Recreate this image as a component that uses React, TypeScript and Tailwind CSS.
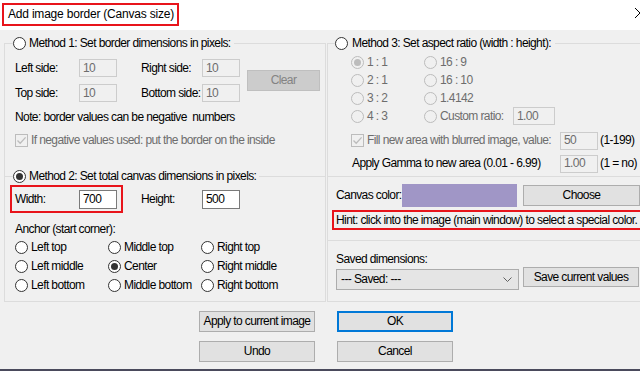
import React from 'react';

const body = "font-['Liberation_Sans',Arial,sans-serif] text-[12px] leading-[15px] tracking-[-0.6px] whitespace-nowrap";

function Radio({ checked = false, disabled = false }: { checked?: boolean; disabled?: boolean }) {
  return (
    <span
      className={
        disabled
          ? 'w-[13px] h-[13px] rounded-full border border-[#bcbcbc] bg-[#f0f0f0] flex items-center justify-center shrink-0'
          : 'w-[13px] h-[13px] rounded-full border border-[#333333] bg-white flex items-center justify-center shrink-0'
      }
    >
      {checked && (
        <span className={disabled ? 'w-[7px] h-[7px] rounded-full bg-[#bcbcbc]' : 'w-[7px] h-[7px] rounded-full bg-[#333333]'} />
      )}
    </span>
  );
}

function Check() {
  return (
    <span className="w-[13px] h-[13px] border border-[#bcbcbc] bg-[#f0f0f0] flex items-center justify-center shrink-0">
      <svg width="11" height="11" viewBox="0 0 11 11">
        <path d="M1.5 5.5 L4.2 8.3 L9.6 2.4" fill="none" stroke="#bcbcbc" strokeWidth="1.3" />
      </svg>
    </span>
  );
}

function Field({ value, disabled = false, w = 'w-[38px]', h = 'h-[18px]' }: { value: string; disabled?: boolean; w?: string; h?: string }) {
  return (
    <div
      className={
        disabled
          ? `${w} ${h} border border-[#cccccc] bg-[#f0f0f0] text-[#6d6d6d] pl-[3px] flex items-center shrink-0`
          : `${w} ${h} border border-[#7a7a7a] bg-white text-black pl-[3px] flex items-center shrink-0`
      }
    >
      {value}
    </div>
  );
}

function Btn({ label, w = 'w-[116px]', h = 'h-[21px]' }: { label: string; w?: string; h?: string }) {
  return <div className={`${w} ${h} bg-[#e1e1e1] border border-[#adadad] flex items-center justify-center shrink-0`}>{label}</div>;
}

const anchors = [
  ['Left top', 'Middle top', 'Right top'],
  ['Left middle', 'Center', 'Right middle'],
  ['Left bottom', 'Middle bottom', 'Right bottom'],
];

export default function App() {
  return (
    <div className={`w-[640px] h-[371px] overflow-hidden bg-[#f0f0f0] flex flex-col text-black ${body}`}>
      {/* title bar */}
      <div className="h-[30px] bg-white flex items-start shrink-0">
        <div className="ml-[2px] mt-[3px] h-[23px] w-[177px] border-2 border-[#e8141b] pl-[4px] flex items-center text-[12px] tracking-[-0.2px]">
          Add image border (Canvas size)
        </div>
        <svg className="ml-auto mr-[-5px] mt-[8px]" width="10" height="10" viewBox="0 0 10 10">
          <path d="M0 0 L10 10 M10 0 L0 10" stroke="#000" strokeWidth="1" />
        </svg>
      </div>

      <div className="flex pl-[4px] mt-[13px] gap-[1px]">
        {/* left column */}
        <div className="w-[322px] flex flex-col shrink-0">
          <div className="h-[134px] border border-[#dcdcdc] flex flex-col">
            <div className="-mt-[7px] ml-[8px] self-start bg-[#f0f0f0] pr-[3px] h-[13px] flex items-center gap-[3px]">
              <Radio />
              <span>Method 1: Set border dimensions in pixels:</span>
            </div>
            <div className="mt-[9px] pl-[10px] flex items-center">
              <div className="flex flex-col gap-[7px]">
                <div className="flex items-center h-[18px]">
                  <span className="w-[64px]">Left side:</span>
                  <Field value="10" disabled />
                  <span className="w-[61px] ml-[24px]">Right side:</span>
                  <Field value="10" disabled />
                </div>
                <div className="flex items-center h-[18px]">
                  <span className="w-[64px]">Top side:</span>
                  <Field value="10" disabled />
                  <span className="w-[61px] ml-[24px]">Bottom side:</span>
                  <Field value="10" disabled />
                </div>
              </div>
              <div className="ml-[7px] w-[73px] h-[21px] bg-[#cccccc] border border-[#bfbfbf] text-[#838383] flex items-center justify-center">
                Clear
              </div>
            </div>
            <div className="mt-[8px] pl-[10px] h-[15px]">Note: border values can be negative&nbsp; numbers</div>
            <div className="mt-[8px] pl-[10px] h-[14px] flex items-center gap-[3px] text-[#6d6d6d]">
              <Check />
              <span>If negative values used: put the border on the inside</span>
            </div>
          </div>

          <div className="-mt-[1px] h-[126px] border border-[#dcdcdc] flex flex-col">
            <div className="-mt-[7px] ml-[8px] self-start bg-[#f0f0f0] pr-[3px] h-[13px] flex items-center gap-[3px]">
              <Radio checked />
              <span>Method 2: Set total canvas dimensions in pixels:</span>
            </div>
            <div className="mt-[2px] ml-[5px] h-[28px] flex items-center">
              <div className="w-[113px] h-[28px] border-2 border-[#e8141b] pl-[3px] flex items-center">
                <span className="w-[64px]">Width:</span>
                <Field value="700" h="h-[19px]" />
              </div>
              <span className="w-[61px] ml-[18px]">Height:</span>
              <Field value="500" h="h-[19px]" />
            </div>
            <div className="mt-[9px] pl-[10px] h-[15px]">Anchor (start corner):</div>
            <div className="mt-[1px] pl-[10px] flex flex-col">
              {anchors.map((row) => (
                <div key={row[0]} className="h-[19px] flex items-center">
                  {row.map((a) => (
                    <div key={a} className="w-[93px] flex items-center gap-[3px]">
                      <Radio checked={a === 'Center'} />
                      <span>{a}</span>
                    </div>
                  ))}
                </div>
              ))}
            </div>
          </div>
        </div>

        {/* right column */}
        <div className="w-[330px] flex flex-col shrink-0">
          <div className="h-[134px] border border-[#dcdcdc] flex flex-col">
            <div className="-mt-[7px] ml-[7px] self-start bg-[#f0f0f0] pr-[4px] h-[13px] flex items-center gap-[4px]">
              <Radio />
              <span>Method 3: Set aspect ratio (width : height):</span>
            </div>
            <div className="mt-[3px] pl-[23px] flex flex-col text-[#6d6d6d]">
              {[
                ['1 : 1', '16 : 9'],
                ['2 : 1', '16 : 10'],
                ['3 : 2', '1.4142'],
                ['4 : 3', 'Custom ratio:'],
              ].map(([a, b]) => (
                <div key={a} className="h-[18px] flex items-center">
                  <div className="w-[73px] flex items-center gap-[3px]">
                    <Radio disabled checked={a === '1 : 1'} />
                    <span>{a}</span>
                  </div>
                  <div className="w-[89px] flex items-center gap-[3px]">
                    <Radio disabled />
                    <span>{b}</span>
                  </div>
                  {a === '4 : 3' && <Field value="1.00" disabled w="w-[42px]" />}
                </div>
              ))}
            </div>
            <div className="mt-[6px] pl-[23px] h-[19px] flex items-center">
              <div className="w-[209px] flex items-center gap-[3px] text-[#6d6d6d]">
                <Check />
                <span>Fill new area with blurred image, value:</span>
              </div>
              <Field value="50" disabled />
              <span className="ml-[2px]">(1-199)</span>
            </div>
            <div className="mt-[4px] pl-[24px] h-[19px] flex items-center">
              <span className="w-[208px]">Apply Gamma to new area (0.01 - 6.99)</span>
              <Field value="1.00" disabled />
              <span className="ml-[2px]">(1 = no)</span>
            </div>
          </div>

          <div className="-mt-[1px] h-[65px] border border-[#dcdcdc] flex flex-col">
            <div className="mt-[7px] pl-[8px] h-[23px] flex items-center">
              <span className="w-[66px]">Canvas color:</span>
              <div className="w-[115px] h-[23px] bg-[#a096c6]" />
              <div className="ml-[6px]">
                <Btn label="Choose" w="w-[117px]" />
              </div>
            </div>
            <div className="mt-[3px] ml-[4px] h-[20px] border-2 border-[#e8141b] pl-[2px] flex items-center">
              Hint: click into the image (main window) to select a special color.
            </div>
          </div>

          <div className="-mt-[1px] h-[62px] border border-[#dcdcdc] flex flex-col">
            <div className="mt-[11px] pl-[8px] h-[15px]">Saved dimensions:</div>
            <div className="pl-[8px] flex items-start">
              <div className="mt-[2px] w-[183px] h-[21px] bg-[#e5e5e5] border border-[#acacac] pl-[4px] pr-[6px] flex items-center justify-between">
                <span>--- Saved: ---</span>
                <svg width="9" height="6" viewBox="0 0 9 6">
                  <path d="M0.5 0.5 L4.5 4.5 L8.5 0.5" fill="none" stroke="#606060" strokeWidth="1" />
                </svg>
              </div>
              <div className="ml-[4px]">
                <Btn label="Save current values" h="h-[20px]" />
              </div>
            </div>
          </div>
        </div>
      </div>

      {/* bottom buttons */}
      <div className="mt-[9px] pl-[199px] flex gap-[22px]">
        <div className="flex flex-col gap-[9px]">
          <Btn label="Apply to current image" />
          <Btn label="Undo" />
        </div>
        <div className="flex flex-col gap-[9px]">
          <div className="w-[116px] h-[21px] bg-[#e1e1e1] border-2 border-[#0078d7] flex items-center justify-center">OK</div>
          <Btn label="Cancel" />
        </div>
      </div>
      <div className="flex-1" />
      <div className="h-[2px] bg-[#4a4a5c] shrink-0" />
    </div>
  );
}
